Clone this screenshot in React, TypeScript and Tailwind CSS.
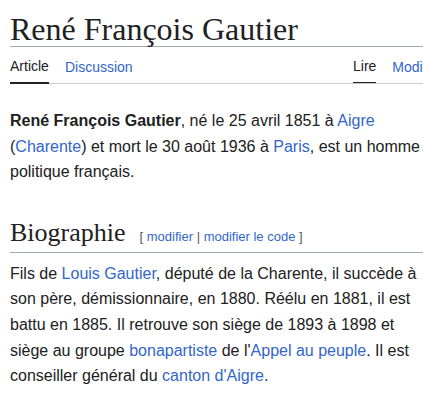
import React from "react";

const A = ({ children }: { children: React.ReactNode }) => (
  <a href="#" className="text-[#3366cc]">
    {children}
  </a>
);

export default function App() {
  return (
    <div className="w-[423px] h-[408px] overflow-hidden bg-white text-[#202122] font-['Liberation_Sans',Arial,sans-serif]">
      <div className="pl-[10px]">
        <h1 className="font-['Liberation_Serif','Times_New_Roman',serif] text-[32px] leading-[34px] pt-[12px] border-b border-[#a2a9b1] whitespace-nowrap">
          René François Gautier
        </h1>
        <div className="flex justify-between border-b border-[#c8ccd1] text-[14px] h-[37px] whitespace-nowrap">
          <div className="flex gap-[16px]">
            <span className="flex items-center pt-[4px] border-b-2 border-[#202122] -mb-px">Article</span>
            <span className="flex items-center pt-[4px] text-[#3366cc]">Discussion</span>
          </div>
          <div className="flex gap-[16px] w-[70px] overflow-hidden">
            <span className="flex items-center pt-[4px] border-b-2 border-[#202122] -mb-px">Lire</span>
            <span className="flex items-center pt-[4px] text-[#3366cc]">Modifier</span>
          </div>
        </div>
        <p className="mt-[24px] pr-[3px] text-[16px] leading-[25.6px]">
          <b>René François Gautier</b>, né le 25 avril 1851 à <A>Aigre</A> (<A>Charente</A>) et mort le 30 août 1936 à <A>Paris</A>, est un homme politique français.
        </p>
        <h2 className="mt-[32px] flex items-baseline border-b border-[#a2a9b1] pb-[3px] whitespace-nowrap">
          <span className="font-['Liberation_Serif','Times_New_Roman',serif] text-[26px] leading-[32px]">Biographie</span>
          <span className="ml-[14px] text-[13px] text-[#54595d]">
            [ <A>modifier</A> | <A>modifier le code</A> ]
          </span>
        </h2>
        <p className="mt-[8px] pr-[3px] text-[16px] leading-[25.6px]">
          Fils de <A>Louis Gautier</A>, député de la Charente, il succède à son père, démissionnaire, en 1880. Réélu en 1881, il est battu en 1885. Il retrouve son siège de 1893 à 1898 et siège au groupe <A>bonapartiste</A> de l'<A>Appel au peuple</A>. Il est conseiller général du <A>canton d'Aigre</A>.
        </p>
      </div>
    </div>
  );
}
